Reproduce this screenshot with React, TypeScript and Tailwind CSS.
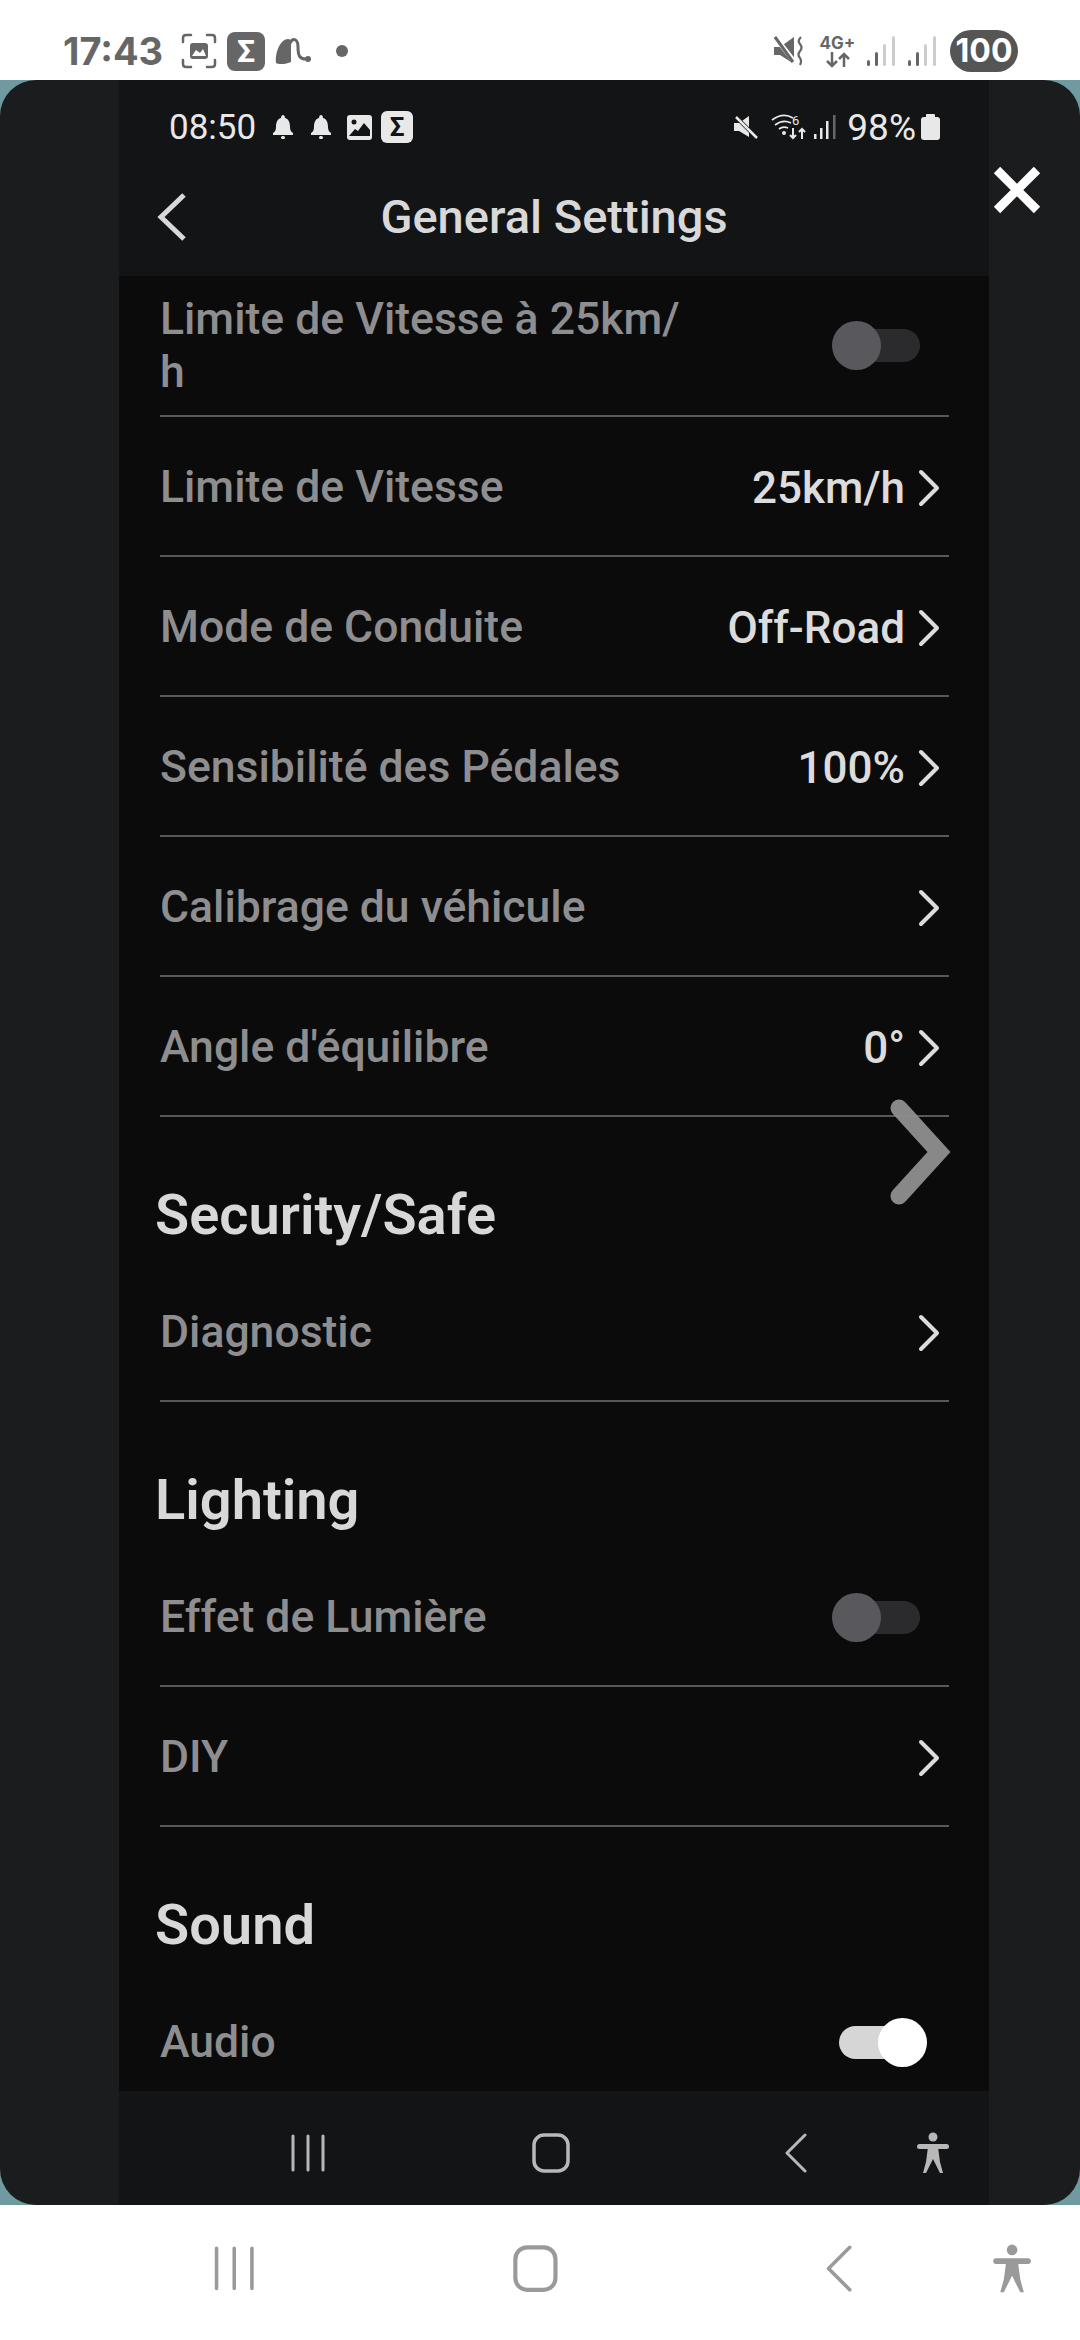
import React from "react";

type RowProps = {
    label: string,
    value?: string,
    chevron?: boolean,
    toggle?: "on" | "off"
}

const Sigma: React.FC<{ className: string }> = ({ className }) => (
    <div className={`flex items-center justify-center font-bold ${className}`}>Σ</div>
);

const Chevron: React.FC = () => (
    <svg width="24" height="38" viewBox="0 0 24 38" className="ml-3" fill="none" stroke="#dcdcdc" strokeWidth="4" strokeLinecap="round" strokeLinejoin="round">
        <path d="M4 3 L20 19 L4 35" />
    </svg>
);

const Toggle: React.FC<{ on: boolean }> = ({ on }) => {
    if (on) {
        return (
            <div className="relative w-[87px] h-[33px] mr-[15px] rounded-full bg-[#d6d6d6]">
                <div className="absolute -right-[1px] -top-[8px] w-[49px] h-[49px] rounded-full bg-white"></div>
            </div>
        );
    }
    return (
        <div className="relative w-[80px] h-[33px] mr-[21px] rounded-full bg-[#2b2b2d]">
            <div className="absolute -left-[8px] -top-[8px] w-[49px] h-[49px] rounded-full bg-[#59595d]"></div>
        </div>
    );
};

const Row: React.FC<RowProps> = ({ label, value, chevron, toggle }) => (
    <div className="h-[140px] shrink-0 ml-[41px] mr-[40px] pt-[3px] border-b-2 border-[#58585a] flex items-center justify-between">
        <div className="text-[44.5px] font-medium text-[#8e8e90]">{label}</div>
        <div className="flex items-center pr-[8px]">
            {value && <div className="text-[44px] font-medium text-[#dcdcdc]">{value}</div>}
            {chevron && <Chevron />}
            {toggle && <Toggle on={toggle === "on"} />}
        </div>
    </div>
);

const SectionTitle: React.FC<{ title: string }> = ({ title }) => (
    <div className="h-[145px] shrink-0 flex items-end pl-[36px] pb-[17px]">
        <div className="text-[56px] leading-[60px] font-semibold text-[#d8d8d8]">{title}</div>
    </div>
);

const NavIcons: React.FC<{ color: string, big: boolean }> = ({ color, big }) => {
    const s = big ? 1.18 : 1;
    return (
        <>
            <svg width={36 * s} height={38 * s} viewBox="0 0 36 38" fill="none" stroke={color} strokeWidth="3" strokeLinecap="round">
                <path d="M3 2 V36 M18 2 V36 M33 2 V36" />
            </svg>
            <svg width={38 * s} height={40 * s} viewBox="0 0 38 40" className={big ? "ml-[258px]" : "ml-[206px]"} fill="none" stroke={color} strokeWidth="3.5">
                <rect x="2" y="2" width="34" height="36" rx="10" />
            </svg>
            <svg width={24 * s} height={40 * s} viewBox="0 0 24 40" className={big ? "ml-[267px]" : "ml-[214px]"} fill="none" stroke={color} strokeWidth="3" strokeLinecap="round" strokeLinejoin="round">
                <path d="M21 2 L3 20 L21 38" />
            </svg>
            <svg width={34 * s} height={42 * s} viewBox="0 0 34 42" className={big ? "ml-[138px]" : "ml-[108px]"} fill={color}>
                <circle cx="17" cy="5" r="4.5" />
                <rect x="1" y="12" width="32" height="5" rx="2.5" />
                <path d="M12 15 H22 L24 30 L27 41 H24 L17 27 L10 41 H7 L10 30 Z" />
            </svg>
        </>
    );
};

const TopStatus: React.FC = () => (
    <div className="h-[80px] shrink-0 bg-white flex items-center justify-between pl-[63px] pr-[62px] pt-[22px] text-[#666666]">
        <div className="flex items-center">
            <div className="w-[98px] text-[38px] leading-none font-bold" style={{ fontFamily: "Inter, sans-serif" }}>17:43</div>
            <svg width="36" height="36" viewBox="0 0 36 36" className="ml-[20px]" fill="none" stroke="#666666" strokeWidth="2.5" strokeLinecap="round">
                <path d="M2 9 V5 Q2 2 5 2 H10 M26 2 H31 Q34 2 34 5 V9 M2 27 V31 Q2 34 5 34 H10 M26 34 H31 Q34 34 34 31 V27" />
                <rect x="9" y="10" width="18" height="16" rx="3" fill="#666666" stroke="none" />
                <path d="M11 23 L15 17 L19 20 L22 16 L25 23 Z" fill="#ffffff" stroke="none" />
            </svg>
            <Sigma className="ml-[10px] w-[38px] h-[39px] rounded-[8px] bg-[#666666] text-white text-[32px]" />
            <svg width="36" height="28" viewBox="0 0 36 28" className="ml-[10px]" fill="none">
                <path d="M1 26 C0 14 6 2 13 2 C17 2 16 6 16 12 V25 C12 27 4 28 1 26 Z" fill="#666666" />
                <path d="M15 6 C18 0 23 2 23 10 C23 18 24 23 33 22" stroke="#666666" strokeWidth="3" />
                <circle cx="33" cy="22" r="3" fill="#666666" />
            </svg>
            <div className="ml-[25px] w-[12px] h-[12px] rounded-full bg-[#666666]"></div>
        </div>
        <div className="flex items-center">
            <svg width="30" height="30" viewBox="0 0 30 30" fill="#666666">
                <path d="M0 11 H6 L20 1 V28 L6 19 H0 Z" />
                <path d="M2 2 L22 28" stroke="#ffffff" strokeWidth="5" />
                <path d="M1 1 L19 26" stroke="#666666" strokeWidth="3" />
                <path d="M27 1 Q23 5 26 8 Q29 12 26 15 Q23 19 26 22 Q28 25 26 29" stroke="#666666" strokeWidth="2.2" fill="none" />
            </svg>
            <div className="ml-[17px] w-[33px] flex flex-col items-center text-[#666666]">
                <div className="text-[17px] leading-[17px] font-bold" style={{ fontFamily: "Inter, sans-serif" }}>4G+</div>
                <svg width="26" height="16" viewBox="0 0 26 16" fill="none" stroke="#666666" strokeWidth="2.5">
                    <path d="M7 0 V14 M2 9 L7 14 L12 9 M19 15 V2 M14 7 L19 2 L24 7" />
                </svg>
            </div>
            <svg width="28" height="30" viewBox="0 0 28 30" className="ml-[13px]">
                <rect x="0" y="24" width="3" height="6" rx="1.5" fill="#666666" />
                <rect x="8" y="16" width="3" height="14" rx="1.5" fill="#666666" />
                <rect x="16" y="8" width="3" height="22" rx="1.5" fill="#cccccc" />
                <rect x="25" y="0" width="3" height="30" rx="1.5" fill="#cccccc" />
            </svg>
            <svg width="28" height="30" viewBox="0 0 28 30" className="ml-[13px]">
                <rect x="0" y="24" width="3" height="6" rx="1.5" fill="#666666" />
                <rect x="8" y="16" width="3" height="14" rx="1.5" fill="#666666" />
                <rect x="16" y="8" width="3" height="22" rx="1.5" fill="#cccccc" />
                <rect x="25" y="0" width="3" height="30" rx="1.5" fill="#cccccc" />
            </svg>
            <div className="ml-[14px] w-[68px] h-[42px] rounded-full bg-[#555555] text-white text-[32px] leading-none font-bold flex items-center justify-center" style={{ fontFamily: "Inter, sans-serif" }}>100</div>
        </div>
    </div>
);

const InnerStatus: React.FC = () => (
    <div className="flex items-center justify-between pl-[50px] pr-[49px] pt-[3px] h-[91px] text-[#e8e8e8]">
        <div className="flex items-center">
            <div className="text-[35px] leading-none">08:50</div>
            <svg width="20" height="24" viewBox="0 0 20 24" className="ml-[17px]" fill="#e8e8e8">
                <path d="M10 0 C11 0 12 1 12 3 C16 4 17 8 17 12 C17 15 18 17 20 18 V20 H0 V18 C2 17 3 15 3 12 C3 8 4 4 8 3 C8 1 9 0 10 0 Z" />
                <rect x="8" y="21" width="4" height="3" rx="1.5" />
            </svg>
            <svg width="20" height="24" viewBox="0 0 20 24" className="ml-[18px]" fill="#e8e8e8">
                <path d="M10 0 C11 0 12 1 12 3 C16 4 17 8 17 12 C17 15 18 17 20 18 V20 H0 V18 C2 17 3 15 3 12 C3 8 4 4 8 3 C8 1 9 0 10 0 Z" />
                <rect x="8" y="21" width="4" height="3" rx="1.5" />
            </svg>
            <svg width="25" height="25" viewBox="0 0 25 25" className="ml-[16px]">
                <rect width="25" height="25" rx="3" fill="#e8e8e8" />
                <circle cx="7" cy="7" r="2.5" fill="#131416" />
                <path d="M2 21 L8 14 L11 16 L17 8 L23 15 V21 Z" fill="#131416" />
            </svg>
            <Sigma className="ml-[9px] w-[32px] h-[32px] rounded-[6px] bg-[#e8e8e8] text-[#131416] text-[26px]" />
        </div>
        <div className="flex items-center">
            <svg width="24" height="24" viewBox="0 0 24 24" fill="#e8e8e8">
                <path d="M0 8 H5 L15 1 V22 L5 16 H0 Z" />
                <path d="M1 1 L24 24" stroke="#131416" strokeWidth="4" />
                <path d="M2 2 L23 23" stroke="#e8e8e8" strokeWidth="2.5" />
            </svg>
            <svg width="35" height="26" viewBox="0 0 35 26" className="ml-[13px]" fill="none" stroke="#e8e8e8" strokeWidth="1.8">
                <path d="M1 6 Q12 -2 22 4 M4 11 Q12 5 20 9 M8 15 Q12 12 17 14" />
                <circle cx="13" cy="19" r="2" fill="#e8e8e8" stroke="none" />
                <text x="21" y="11" fontSize="13" fill="#e8e8e8" stroke="none" fontFamily="Roboto">6</text>
                <path d="M22 14 V24 M19 21 L22 24 L25 21 M31 25 V15 M28 18 L31 15 L34 18" strokeWidth="2" />
            </svg>
            <svg width="22" height="24" viewBox="0 0 22 24" className="ml-[8px]">
                <rect x="0" y="19" width="2.5" height="5" fill="#e8e8e8" />
                <rect x="6" y="13" width="2.5" height="11" fill="#e8e8e8" />
                <rect x="12" y="6" width="2.5" height="18" fill="#e8e8e8" />
                <rect x="19" y="0" width="2.5" height="24" fill="#666666" />
            </svg>
            <div className="ml-[11px] text-[37px] leading-none">98%</div>
            <svg width="19" height="26" viewBox="0 0 19 26" className="ml-[5px]" fill="#e8e8e8">
                <rect x="5" y="0" width="9" height="4" rx="1" />
                <rect x="0" y="3" width="19" height="23" rx="3" />
            </svg>
        </div>
    </div>
);

const App: React.FC = () => {
    return (
        <div className="w-[1080px] h-[2340px] flex flex-col bg-white overflow-hidden" style={{ fontFamily: "Roboto, sans-serif" }}>
            <TopStatus />

            <div className="h-[2125px] shrink-0 bg-[#6f9aa0]">
                <div className="relative h-full rounded-[36px] bg-[#1a1c1e] flex overflow-hidden">
                    <div className="w-[870px] ml-[119px] flex flex-col">
                        <div className="h-[196px] shrink-0 bg-[#131416]">
                            <InnerStatus />
                            <div className="relative h-[105px] pb-[14px] flex items-center justify-center">
                                <svg width="30" height="48" viewBox="0 0 30 48" className="absolute left-[38px] top-[22px]" fill="none" stroke="#d8d8d8" strokeWidth="5">
                                    <path d="M27 2 L4 24 L27 46" />
                                </svg>
                                <div className="text-[47px] leading-[56px] font-medium text-[#d8d8d8]">General Settings</div>
                            </div>
                        </div>

                        <div className="h-[1815px] shrink-0 bg-[#0b0b0c] flex flex-col overflow-hidden">
                            <div className="h-[141px] shrink-0 ml-[41px] mr-[40px] border-b-2 border-[#58585a] flex items-center justify-between">
                                <div className="w-[530px] text-[44.5px] leading-[53px] font-medium text-[#8e8e90]">Limite de Vitesse à 25km/<br />h</div>
                                <div className="pr-[8px]"><Toggle on={false} /></div>
                            </div>
                            <Row label="Limite de Vitesse" value="25km/h" chevron />
                            <Row label="Mode de Conduite" value="Off-Road" chevron />
                            <Row label="Sensibilité des Pédales" value="100%" chevron />
                            <Row label="Calibrage du véhicule" chevron />
                            <Row label="Angle d'équilibre" value="0°" chevron />
                            <SectionTitle title="Security/Safe" />
                            <Row label="Diagnostic" chevron />
                            <SectionTitle title="Lighting" />
                            <Row label="Effet de Lumière" toggle="off" />
                            <Row label="DIY" chevron />
                            <SectionTitle title="Sound" />
                            <div className="h-[119px] shrink-0 ml-[41px] mr-[40px] flex items-center justify-between pt-[22px]">
                                <div className="text-[44.5px] font-medium text-[#8e8e90]">Audio</div>
                                <div className="pr-[8px]"><Toggle on /></div>
                            </div>
                        </div>

                        <div className="h-[114px] shrink-0 bg-[#131416] flex items-center pt-[10px] pl-[171px]">
                            <NavIcons color="#b8b8b8" big={false} />
                        </div>
                    </div>

                    <svg width="66" height="108" viewBox="0 0 66 108" className="absolute left-[889px] top-[1018px]" fill="none" stroke="#8f8f8f" strokeWidth="17" strokeLinecap="round" strokeLinejoin="miter" opacity="0.95">
                        <path d="M10 10 L50 54 L10 98" />
                    </svg>
                    <svg width="50" height="50" viewBox="0 0 50 50" className="absolute left-[992px] top-[85px]" fill="none" stroke="#ffffff" strokeWidth="9">
                        <path d="M5 5 L45 45 M45 5 L5 45" />
                    </svg>
                </div>
            </div>

            <div className="h-[135px] shrink-0 bg-white flex items-center pl-[213px] pb-[8px]">
                <NavIcons color="#9a9a9a" big />
            </div>
        </div>
    );
};

export default App;
